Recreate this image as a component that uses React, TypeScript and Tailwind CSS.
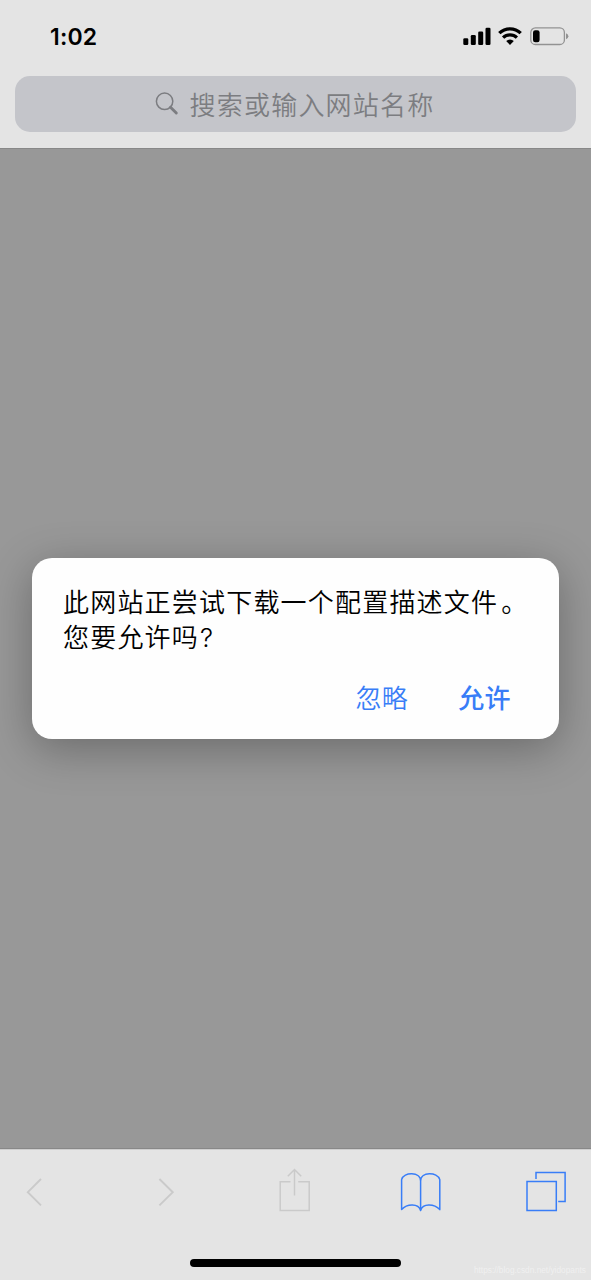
import type { ReactNode } from 'react'

function StatusBar() {
  return (
    <div className="flex h-[72px] justify-between pl-[50px] pr-[22px] pt-[24px]">
      <span className="font-['Inter',sans-serif] text-[23px] leading-[26px] font-semibold tracking-[0.2px]">1:02</span>
      <div className="flex pt-[2px]">
        <svg width="28" height="20" viewBox="0 0 28 20">
          <rect x="0.3" y="12.3" width="5" height="6.7" rx="1.3" />
          <rect x="7.8" y="9" width="5" height="10" rx="1.3" />
          <rect x="15.2" y="5.5" width="5" height="13.5" rx="1.3" />
          <rect x="22.5" y="1.8" width="5" height="17.2" rx="1.3" />
        </svg>
        <svg className="ml-[7px]" width="24" height="20" viewBox="0 0 24 20" fill="none" stroke="black">
          <path d="M1.3 7.2 A15.2 15.2 0 0 1 22.7 7.2" strokeWidth="3.3" />
          <path d="M5.1 11.7 A9.8 9.8 0 0 1 18.9 11.7" strokeWidth="3.2" />
          <path d="M12 19 L8.2 15.1 A5.4 5.4 0 0 1 15.8 15.1 Z" fill="black" stroke="none" />
        </svg>
        <svg className="ml-[8px]" width="39" height="20" viewBox="0 0 39 20">
          <rect x="0.8" y="1.9" width="33.6" height="16.6" rx="4.6" fill="none" stroke="#929292" strokeWidth="1.3" />
          <rect x="3" y="4.2" width="6.6" height="12" rx="2.2" />
          <path d="M36 7.2 Q38.4 8.2 38.4 10.2 Q38.4 12.2 36 13.2 Z" fill="#929292" />
        </svg>
      </div>
    </div>
  )
}

function SearchBar() {
  return (
    <div className="mx-[15px] mt-[4px] flex h-[56px] items-center justify-center rounded-[15px] bg-[#c4c5ca] pr-[2px] text-[#7c7d81]">
      <svg width="24" height="24" viewBox="0 0 24 24" fill="none" stroke="currentColor">
        <circle cx="9.6" cy="9.3" r="8.2" strokeWidth="1.5" />
        <path d="M15.5 15.2 L21.3 21" strokeWidth="2.9" strokeLinecap="round" />
      </svg>
      <span className="ml-[11px] text-[26px] leading-[38px] font-[350] tracking-[1.2px]">搜索或输入网站名称</span>
    </div>
  )
}

function Dialog() {
  return (
    <div className="mx-[32px] h-[181px] rounded-[20px] bg-[#fefefe] px-[31px] pt-[25px] shadow-[0_10px_45px_rgba(0,0,0,0.3)]">
      <p className="h-[70px] text-[26px] leading-[35px] font-[350] tracking-[1.2px] whitespace-nowrap text-black">
        此网站正尝试下载一个配置描述文件<span className="ml-[3px]">。</span>
        <br />
        您要允许吗<span className="ml-px font-['Inter',sans-serif] leading-none font-light">?</span>
      </p>
      <div className="mt-[26px] flex justify-end gap-[50px] pr-[17px] text-[26px] leading-[36px] tracking-[0.4px] text-[#387df7]">
        <button className="font-[350]">忽略</button>
        <button className="font-medium">允许</button>
      </div>
    </div>
  )
}

function ToolIcon({ width, className, children }: { width: number; className: string; children: ReactNode }) {
  return (
    <svg className={className} width={width} height="46" viewBox={`0 0 ${width} 46`} fill="none" stroke="currentColor" strokeWidth="1.5">
      {children}
    </svg>
  )
}

function Toolbar() {
  return (
    <div className="flex h-[131px] flex-col border-t border-[#cfcfcf] bg-[#e4e4e4]">
      <div className="mt-[17px] flex pl-[26px]">
        <ToolIcon width={16} className="text-[#cacaca]">
          <path d="M15 12 L1.8 25.2 L15 38.4" strokeWidth="1.9" />
        </ToolIcon>
        <ToolIcon width={16} className="ml-[116px] text-[#cacaca]">
          <path d="M1.4 12 L14.8 25.2 L1.4 38.4" strokeWidth="1.9" />
        </ToolIcon>
        <ToolIcon width={32} className="ml-[105px] text-[#cacaca]">
          <path d="M11.5 14.8 H1.2 V43.5 H30.2 V14.8 H19.2 M15.5 28.5 V2.8 M8.8 9.2 L15.5 2.5 L22.2 9.2" />
        </ToolIcon>
        <ToolIcon width={42} className="ml-[89px] text-[#387df7]">
          <path
            d="M20.6 43.5 V14 C20.6 4.5 3.5 4.8 1.6 12.6 V42.6 C7 36.5 18.5 36.2 20.6 43.5 C22.7 36.2 34 36.5 39.8 42.6 V12.6 C37.5 4.8 20.6 4.5 20.6 14"
            strokeLinejoin="round"
          />
        </ToolIcon>
        <ToolIcon width={42} className="ml-[84px] text-[#387df7]">
          <path d="M1 14.6 H30.3 V43.5 H1 Z M10 12 V5.5 H39.1 V34.4 H32.2" />
        </ToolIcon>
      </div>
      <div className="mx-auto mt-[46px] h-[8px] w-[211px] rounded-full bg-black" />
    </div>
  )
}

export default function App() {
  return (
    <div className="relative flex h-[1280px] w-[591px] flex-col overflow-hidden bg-[#e4e4e4] font-['Noto_Sans_CJK_SC',sans-serif]">
      <header className="h-[148px]">
        <StatusBar />
        <SearchBar />
      </header>
      <main className="h-[1001px] border-y border-[#888888] bg-[#989898] pt-[409px]">
        <Dialog />
      </main>
      <Toolbar />
      <span className="absolute right-[5px] bottom-[3px] font-['Liberation_Sans',sans-serif] text-[8.3px] leading-[14px] text-[#f0f0f0]">
        https://blog.csdn.net/yidopants
      </span>
    </div>
  )
}
